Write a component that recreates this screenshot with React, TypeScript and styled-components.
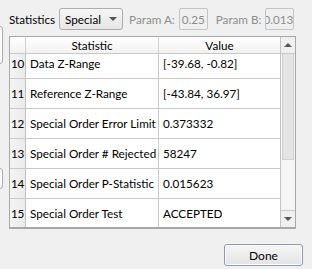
import styled, { createGlobalStyle } from 'styled-components';

const GlobalStyle = createGlobalStyle`
  html, body {
    margin: 0;
    padding: 0;
    background: #f0f0f0;
  }
  body {
    font-family: Lato, 'Open Sans', sans-serif;
    font-size: 11.7px;
    color: #000;
  }
`;

const rows = [
  { id: 10, name: 'Data Z-Range', value: '[-39.68, -0.82]' },
  { id: 11, name: 'Reference Z-Range', value: '[-43.84, 36.97]' },
  { id: 12, name: 'Special Order Error Limit', value: '0.373332' },
  { id: 13, name: 'Special Order # Rejected', value: '58247' },
  { id: 14, name: 'Special Order P-Statistic', value: '0.015623' },
  { id: 15, name: 'Special Order Test', value: 'ACCEPTED' },
];

export default function App() {
  return (
    <>
      <GlobalStyle />
      <Window>
        <SideStrip>
          <GhostBox $top={26} $height={36} />
          <GhostBox $top={168} $height={19} />
        </SideStrip>
        <Main>
          <Toolbar>
            <Label>Statistics</Label>
            <Combo>
              <span>Special</span>
              <Arrow />
            </Combo>
            <Label $muted>Param A:</Label>
            <ParamInput>0.25</ParamInput>
            <Label $muted>Param B:</Label>
            <ParamInput $clipped>0.013</ParamInput>
          </Toolbar>
          <Table>
            <Grid>
              <Header>
                <HeadCell />
                <HeadCell>Statistic</HeadCell>
                <HeadCell>Value</HeadCell>
              </Header>
              <Viewport>
                <Rows>
                  {rows.map((r) => (
                    <Row key={r.id}>
                      <RowNum>{r.id}</RowNum>
                      <Cell>{r.name}</Cell>
                      <Cell>{r.value}</Cell>
                    </Row>
                  ))}
                </Rows>
              </Viewport>
            </Grid>
            <ScrollBar>
              <ScrollButton>
                <Tri $up />
              </ScrollButton>
              <Track>
                <Thumb />
              </Track>
              <ScrollButton>
                <Tri />
              </ScrollButton>
            </ScrollBar>
          </Table>
          <Footer>
            <DoneButton>Done</DoneButton>
          </Footer>
        </Main>
      </Window>
    </>
  );
}

const Window = styled.div`
  display: flex;
  width: 312px;
  height: 269px;
  overflow: hidden;
`;

const SideStrip = styled.div`
  position: relative;
  width: 4px;
  flex-shrink: 0;
  overflow: hidden;
`;

const GhostBox = styled.div<{ $top: number; $height: number }>`
  position: absolute;
  right: 1px;
  top: ${(p) => p.$top}px;
  width: 20px;
  height: ${(p) => p.$height}px;
  border: 1px solid #adadad;
  border-radius: 3px;
  background: #fbfbfb;
`;

const Main = styled.div`
  flex: 1;
  display: flex;
  flex-direction: column;
  padding: 8px 0 0 5px;
`;

const Toolbar = styled.div`
  display: flex;
  align-items: center;
  height: 22px;
`;

const Label = styled.span<{ $muted?: boolean }>`
  color: ${(p) => (p.$muted ? '#8d8d8d' : '#000')};
  margin-right: 4px;
  white-space: nowrap;
`;

const Combo = styled.div`
  display: flex;
  align-items: center;
  justify-content: space-between;
  box-sizing: border-box;
  width: 64px;
  height: 22px;
  padding: 0 5px 0 5px;
  margin-right: 6px;
  border: 1px solid #adadad;
  border-radius: 3px;
  background: linear-gradient(#f6f6f6, #e6e6e6);
`;

const Arrow = styled.span`
  width: 0;
  height: 0;
  border-left: 4px solid transparent;
  border-right: 4px solid transparent;
  border-top: 4px solid #555;
`;

const ParamInput = styled.div<{ $clipped?: boolean }>`
  box-sizing: border-box;
  width: 29px;
  height: 22px;
  margin-right: 8px;
  border: 1px solid #c4c4c4;
  border-radius: 2px;
  color: #8d8d8d;
  line-height: 20px;
  overflow: hidden;
  white-space: nowrap;
  text-indent: ${(p) => (p.$clipped ? '-4px' : '1px')};
  padding-left: 1px;
`;

const Table = styled.div`
  display: flex;
  margin-top: 6px;
  width: 287px;
  height: 193px;
  box-sizing: border-box;
  border: 1px solid #a8a8a8;
  border-bottom-width: 2px;
  background: #fff;
`;

const Grid = styled.div`
  flex: 1;
  display: flex;
  flex-direction: column;
`;

const Header = styled.div`
  display: grid;
  grid-template-columns: 16px 133px 121px;
  height: 16px;
  border-bottom: 1px solid #c8c8c8;
  background: linear-gradient(#ffffff, #f2f2f2);
`;

const HeadCell = styled.div`
  text-align: center;
  line-height: 16px;
  border-right: 1px solid #d2d2d2;
  &:last-child {
    border-right: none;
  }
`;

const Viewport = styled.div`
  flex: 1;
  overflow: hidden;
`;

const Rows = styled.div`
  margin-top: -5px;
`;

const Row = styled.div`
  display: grid;
  grid-template-columns: 16px 133px 121px;
  height: 30px;
  box-sizing: border-box;
  border-bottom: 1px solid #c8c8c8;
`;

const RowNum = styled.div`
  background: linear-gradient(90deg, #f4f4f4, #ebebeb);
  border-right: 1px solid #c0c0c0;
  line-height: 29px;
  text-align: center;
  letter-spacing: -0.2px;
`;

const Cell = styled.div`
  line-height: 29px;
  padding-left: 4px;
  white-space: nowrap;
  overflow: hidden;
  border-right: 1px solid #c8c8c8;
  &:last-child {
    border-right: none;
  }
`;

const ScrollBar = styled.div`
  display: flex;
  flex-direction: column;
  width: 15px;
  border-left: 1px solid #c4c4c4;
  background: #f0f0f0;
`;

const ScrollButton = styled.div`
  height: 16px;
  display: flex;
  align-items: center;
  justify-content: center;
  background: #f0f0f0;
  border-bottom: 1px solid #c8c8c8;
  &:last-child {
    border-bottom: none;
    border-top: 1px solid #c8c8c8;
  }
`;

const Tri = styled.span<{ $up?: boolean }>`
  width: 0;
  height: 0;
  border-left: 4px solid transparent;
  border-right: 4px solid transparent;
  ${(p) =>
    p.$up ? 'border-bottom: 4px solid #555;' : 'border-top: 4px solid #555;'}
`;

const Track = styled.div`
  flex: 1;
  background: #f5f5f5;
`;

const Thumb = styled.div`
  height: 105px;
  margin: 0 1px;
  background: #e4e4e4;
  border: 1px solid #d0d0d0;
  border-top: none;
`;

const Footer = styled.div`
  display: flex;
  justify-content: flex-end;
  padding: 15px 0 0 0;
`;

const DoneButton = styled.button`
  box-sizing: border-box;
  width: 79px;
  height: 22px;
  margin-right: 9px;
  font-family: inherit;
  font-size: 12px;
  color: #000;
  border: 1px solid #8f9bac;
  border-radius: 3px;
  background: linear-gradient(#f7f7f7, #e3e3e3);
  box-shadow: inset 0 0 0 1px #f9fbfd;
`;
